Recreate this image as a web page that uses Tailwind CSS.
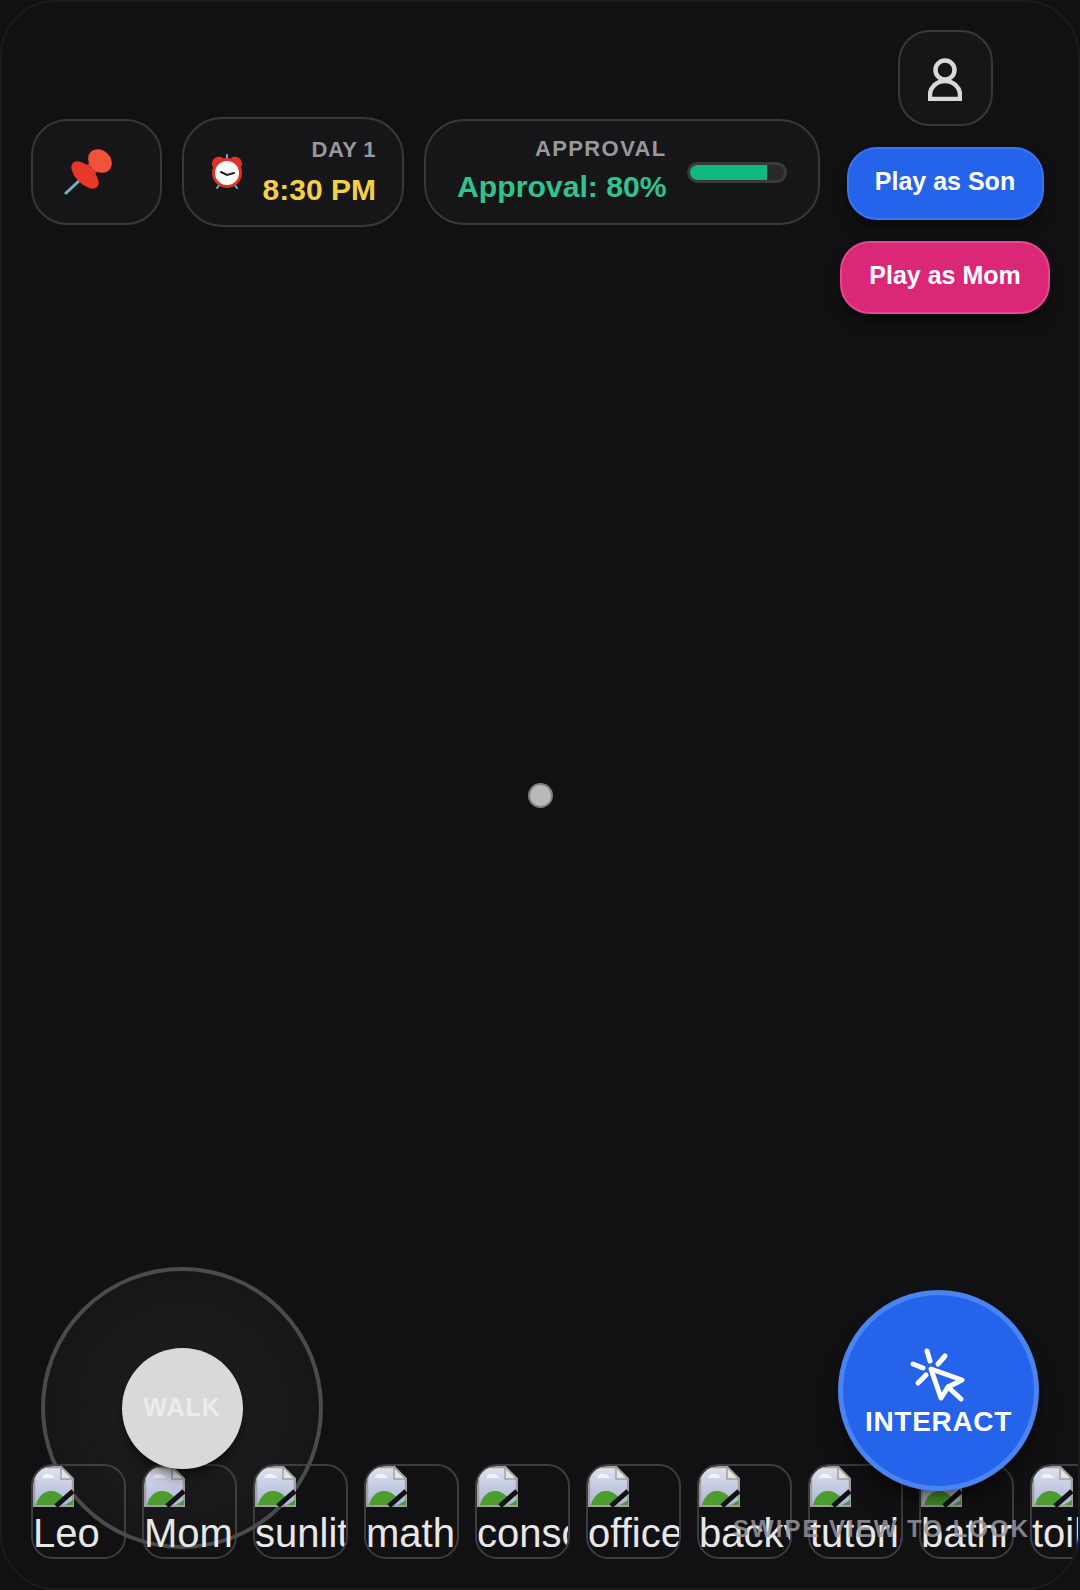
<!DOCTYPE html>
<html lang="en">
<head>
<meta charset="UTF-8">
<title>Day 1</title>
<script src="https://cdn.jsdelivr.net/npm/@tailwindcss/browser@4"></script>
</head>
<body class="bg-[#111113] font-['Liberation_Sans',Arial,sans-serif]">
<svg class="absolute w-0 h-0" width="0" height="0">
  <defs>
    <linearGradient id="sky" x1="0" y1="0" x2="0" y2="1"><stop offset="0" stop-color="#dfe3ee"/><stop offset="1" stop-color="#aab4d8"/></linearGradient>
    <symbol id="broken" viewBox="0 0 41 41">
      <path d="M4 1h24l12 12v27H1V4z" fill="url(#sky)" stroke="#a0a0a0" stroke-width="2.5"/>
      <path d="M28 1v12h12z" fill="#e4e4e4" stroke="#a0a0a0" stroke-width="1.5"/>
      <path d="M9 12c1-4 4-5 7-4 3 0 5 2 6 4z" fill="#f2f3f8"/>
      <path d="M3 39c2-9 9-15 16-14 5 0 10 4 13 8l-7 6z" fill="#4c9c2e"/>
      <path d="M32 39l8-5v5z" fill="#4c9c2e"/>
      <path d="M23 40 40 25" stroke="#111113" stroke-width="5"/>
    </symbol>
  </defs>
</svg>

<div class="relative flex flex-col justify-between w-[1080px] h-[1590px] overflow-hidden rounded-[56px] border-2 border-[#1c1c1f] bg-[#111113]">

  <!-- top hud -->
  <div class="flex items-center gap-5 pl-[29px] pr-[28px] pt-[28px]">
    <div class="flex items-center shrink-0 w-[131px] h-[106px] pl-[31px] rounded-[36px] border-[2.5px] border-[#38383a] bg-[#161618]">
      <svg width="50" height="48" viewBox="0 0 50 48">
        <path d="M16 32 2 45" stroke="#6fb4c4" stroke-width="3" stroke-linecap="round"/>
        <path d="M15 21Q24 20 29 8L41 19Q30 24 27 33Z" fill="#d8352a"/>
        <ellipse cx="21" cy="27" rx="17" ry="9" transform="rotate(45 21 27)" fill="#e8382b"/>
        <ellipse cx="36" cy="13" rx="13" ry="10.5" transform="rotate(45 36 13)" fill="#f1523a"/>
      </svg>
    </div>
    <div class="flex items-center justify-between shrink-0 w-[222px] h-[110px] pl-[27px] pr-[26px] rounded-[40px] border-[2.5px] border-[#38383a] bg-[#161618]">
      <svg width="32" height="36" viewBox="0 0 32 36">
        <path d="M6 34 9 30M26 34 23 30M16 1v4" stroke="#6fb4c4" stroke-width="2" stroke-linecap="round"/>
        <path d="M1 10c0-5 4-8 9-7 1 0 2 1 2 2L3 14c-1-1-2-2-2-4zM31 10c0-5-4-8-9-7-1 0-2 1-2 2l9 9c1-1 2-2 2-4z" fill="#e0322a"/>
        <circle cx="16" cy="19" r="13.5" fill="#fff" stroke="#e0322a" stroke-width="3"/>
        <path d="M10 18l6 3 7-2" fill="none" stroke="#222" stroke-width="2" stroke-linecap="round"/>
      </svg>
      <div class="flex flex-col items-end gap-[10px] pb-[1px]">
        <span class="text-[22px] leading-[26px] font-bold tracking-[.4px] text-[#98989e]">DAY 1</span>
        <span class="text-[30px] leading-[34px] font-bold text-[#f3d044]">8:30 PM</span>
      </div>
    </div>
    <div class="flex items-center gap-5 shrink-0 w-[396px] h-[106px] pl-[31px] rounded-[40px] border-[2.5px] border-[#38383a] bg-[#161618]">
      <div class="flex flex-col items-end gap-[8px] pb-[4px]">
        <span class="text-[22px] leading-[26px] font-bold tracking-[1.4px] text-[#98989e]">APPROVAL</span>
        <span class="text-[30.2px] leading-[34px] font-bold text-[#2fc48f]">Approval: 80%</span>
      </div>
      <div class="w-[100px] h-[21px] rounded-full overflow-hidden border-[3px] border-[#3a3a3c] bg-[#29292b]">
        <div class="h-full bg-[#10b981]" style="width:82%"></div>
      </div>
    </div>
    <div class="flex flex-col items-center gap-[21px] shrink-0 w-[210px]">
      <div class="flex items-center justify-center w-[95px] h-[96px] rounded-[32px] border-[2.5px] border-[#38383a] bg-[#161618]">
        <svg class="mt-[2px]" width="34" height="43" viewBox="0 0 34 43" fill="none" stroke="#d9d9d9" stroke-width="4.5">
          <circle cx="17" cy="12" r="9.5"/>
          <path d="M2 41v-4a15 14 0 0 1 30 0v4z"/>
        </svg>
      </div>
      <button class="w-[197px] h-[73px] pb-[4px] rounded-[30px] border-2 border-[#3b74ee] bg-[#2563eb] text-[25px] font-bold text-white shadow-lg shadow-black/40">Play as Son</button>
      <button class="w-[210px] h-[73px] pb-[4px] rounded-[30px] border-2 border-[#e5488f] bg-[#db2777] text-[25px] font-bold text-white shadow-lg shadow-black/40">Play as Mom</button>
    </div>
  </div>

  <!-- crosshair -->
  <div class="absolute inset-0 flex items-center justify-center pointer-events-none">
    <div class="w-[25px] h-[25px] rounded-full border-2 border-[#808082] bg-[#b9b9b9]"></div>
  </div>

  <!-- joystick -->
  <div class="absolute left-[39px] bottom-[39px] flex items-center justify-center w-[282px] h-[282px] rounded-full border-[4px] border-[#4b4b4d] bg-[radial-gradient(circle,#212123_0%,#18181a_55%,#131315_100%)]">
    <div class="relative z-20 flex items-center justify-center w-[121px] h-[121px] rounded-full bg-[#d9d9d9] shadow-lg shadow-black/50">
      <span class="text-[25px] font-bold tracking-[1px] text-[#ececec]">WALK</span>
    </div>
  </div>

  <!-- item strip -->
  <div class="relative z-10 flex gap-4 pl-[29px] pb-[29px] overflow-hidden">
    <div class="flex flex-col shrink-0 w-[95px] h-[95px] overflow-hidden rounded-[22px] border-2 border-[#48484a]/80 text-[40px] leading-[52px] whitespace-nowrap text-[#e8e8e8]"><svg class="shrink-0" width="41" height="41"><use href="#broken"/></svg><span>Leo</span></div>
    <div class="flex flex-col shrink-0 w-[95px] h-[95px] overflow-hidden rounded-[22px] border-2 border-[#48484a]/80 text-[40px] leading-[52px] whitespace-nowrap text-[#e8e8e8]"><svg class="shrink-0" width="41" height="41"><use href="#broken"/></svg><span>Mom</span></div>
    <div class="flex flex-col shrink-0 w-[95px] h-[95px] overflow-hidden rounded-[22px] border-2 border-[#48484a]/80 text-[40px] leading-[52px] whitespace-nowrap text-[#e8e8e8]"><svg class="shrink-0" width="41" height="41"><use href="#broken"/></svg><span>sunlit room</span></div>
    <div class="flex flex-col shrink-0 w-[95px] h-[95px] overflow-hidden rounded-[22px] border-2 border-[#48484a]/80 text-[40px] leading-[52px] whitespace-nowrap text-[#e8e8e8]"><svg class="shrink-0" width="41" height="41"><use href="#broken"/></svg><span>math book</span></div>
    <div class="flex flex-col shrink-0 w-[95px] h-[95px] overflow-hidden rounded-[22px] border-2 border-[#48484a]/80 text-[40px] leading-[52px] whitespace-nowrap text-[#e8e8e8]"><svg class="shrink-0" width="41" height="41"><use href="#broken"/></svg><span>console</span></div>
    <div class="flex flex-col shrink-0 w-[95px] h-[95px] overflow-hidden rounded-[22px] border-2 border-[#48484a]/80 text-[40px] leading-[52px] whitespace-nowrap text-[#e8e8e8]"><svg class="shrink-0" width="41" height="41"><use href="#broken"/></svg><span>office</span></div>
    <div class="flex flex-col shrink-0 w-[95px] h-[95px] overflow-hidden rounded-[22px] border-2 border-[#48484a]/80 text-[40px] leading-[52px] whitespace-nowrap text-[#e8e8e8]"><svg class="shrink-0" width="41" height="41"><use href="#broken"/></svg><span>backyard</span></div>
    <div class="flex flex-col shrink-0 w-[95px] h-[95px] overflow-hidden rounded-[22px] border-2 border-[#48484a]/80 text-[40px] leading-[52px] whitespace-nowrap text-[#e8e8e8]"><svg class="shrink-0" width="41" height="41"><use href="#broken"/></svg><span>tutorial</span></div>
    <div class="flex flex-col shrink-0 w-[95px] h-[95px] overflow-hidden rounded-[22px] border-2 border-[#48484a]/80 text-[40px] leading-[52px] whitespace-nowrap text-[#e8e8e8]"><svg class="shrink-0" width="41" height="41"><use href="#broken"/></svg><span>bathroom</span></div>
    <div class="flex flex-col shrink-0 w-[95px] h-[95px] overflow-hidden rounded-[22px] border-2 border-[#48484a]/80 text-[40px] leading-[52px] whitespace-nowrap text-[#e8e8e8]"><svg class="shrink-0" width="41" height="41"><use href="#broken"/></svg><span>toilet</span></div>
  </div>

  <!-- look hint -->
  <div class="absolute z-20 right-[48px] bottom-[45px] text-[24px] leading-[28px] font-bold tracking-[2px] whitespace-nowrap text-[#98989e]/85">SWIPE VIEW TO LOOK</div>

  <!-- interact -->
  <div class="absolute z-30 right-[39px] bottom-[97px] flex flex-col items-center justify-center w-[201px] h-[201px] pt-[4px] rounded-full border-[5px] border-[#4a84f0] bg-[#2563eb] shadow-xl shadow-black/40">
    <svg class="mr-[6px]" width="60" height="56" viewBox="905 1345 60 56" fill="none" stroke="#fff" stroke-width="5" stroke-linecap="round" stroke-linejoin="round">
      <path d="M926 1349l3 10M944 1354l-7 8M912 1362l10 4M925 1373l-8 8"/>
      <path d="M930 1367l31 11-14 7-7 11z"/>
      <path d="M947 1385l13 12"/>
    </svg>
    <span class="mt-[2px] text-[28px] leading-[34px] font-bold tracking-[.7px] text-white">INTERACT</span>
  </div>
</div>
</body>
</html>
